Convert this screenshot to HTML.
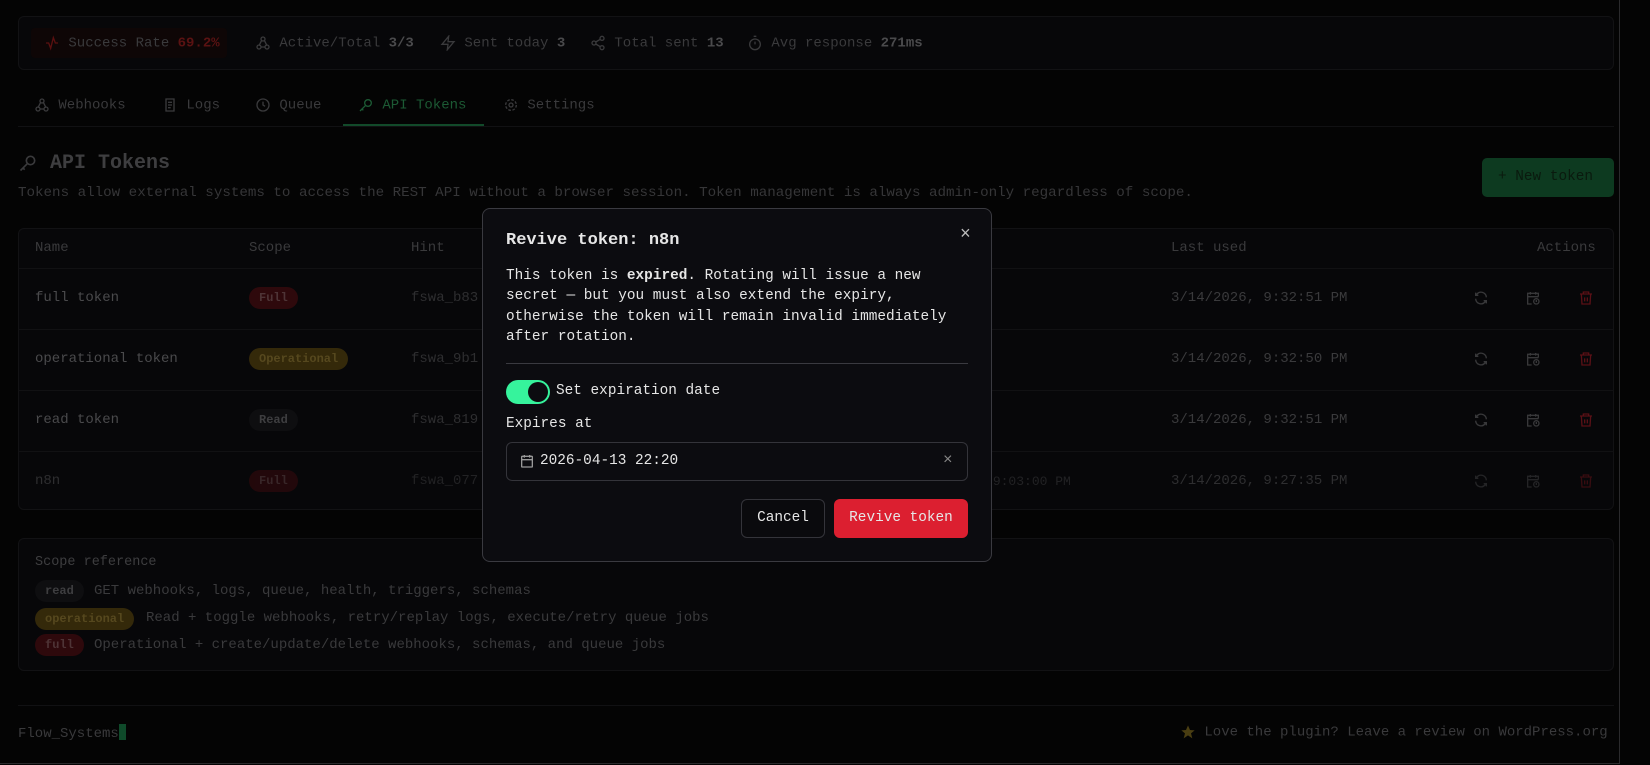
<!DOCTYPE html>
<html><head><meta charset="utf-8"><style>
*{box-sizing:border-box;margin:0;padding:0}
body{width:1650px;height:765px;background:#040404;font-family:"Liberation Mono",monospace;font-size:14px;color:#3a3a3c;overflow:hidden;position:relative}
.frame{position:absolute;left:0;top:0;width:1620px;height:764px;border-right:1px solid #2a2a2c;border-bottom:1px solid #2a2a2c}
.abs{position:absolute;white-space:nowrap}
.card{position:absolute;background:#070709;border:1px solid #121214;border-radius:6px}
svg{display:inline-block;vertical-align:middle}
.badge{position:absolute;height:22px;border-radius:11px;font-weight:bold;font-size:12px;line-height:22px;padding:0 10px}
.full{background:#2e090c;color:#4e3436}
.op{background:#34290a;color:#56481e}
.rd{background:#0e0e10;color:#3e3e40}
.rowline{position:absolute;left:18px;width:1596px;height:1px;background:#111113}
.modal{position:absolute;left:482px;top:208px;width:510px;height:354px;background:#0c0c10;border:1px solid #3a3a40;border-radius:8px;color:#e6e6e6}
.modal .t{font-family:"Liberation Mono",monospace;font-size:14.4px}
</style></head><body>
<div class="frame"></div>

<!-- stats bar -->
<div class="card" style="left:18px;top:16px;width:1596px;height:54px"></div>
<div class="abs" style="left:31px;top:28px;width:196px;height:30px;background:#0e0606;border-radius:4px"></div>
<div class="abs" style="left:44px;top:35px;color:#3a3a3c">
<svg width="16" height="16" viewBox="0 0 24 24" fill="none" stroke="#5a1010" stroke-width="2"><path d="M3 12h4l3 8 4-16 3 8h4"/></svg>
 Success Rate <b style="color:#5a1212">69.2%</b></div>
<div class="abs" style="left:255px;top:35px"><svg width="16" height="16" viewBox="0 0 24 24" fill="none" stroke="#3a3a3c" stroke-width="2"><circle cx="6" cy="18" r="3"/><circle cx="18" cy="18" r="3"/><circle cx="12" cy="6" r="3"/><path d="M9 18h6M10 8l-4 8M14 8l4 8"/></svg> Active/Total <b style="color:#4a4a4c">3/3</b></div>
<div class="abs" style="left:440px;top:35px"><svg width="16" height="16" viewBox="0 0 24 24" fill="none" stroke="#3a3a3c" stroke-width="2"><path d="M13 2 3 14h9l-1 8 10-12h-9z"/></svg> Sent today <b style="color:#4a4a4c">3</b></div>
<div class="abs" style="left:590px;top:35px"><svg width="16" height="16" viewBox="0 0 24 24" fill="none" stroke="#3a3a3c" stroke-width="2"><circle cx="18" cy="5" r="3"/><circle cx="6" cy="12" r="3"/><circle cx="18" cy="19" r="3"/><path d="M8.6 13.5l6.8 4M15.4 6.5l-6.8 4"/></svg> Total sent <b style="color:#4a4a4c">13</b></div>
<div class="abs" style="left:747px;top:35px"><svg width="16" height="16" viewBox="0 0 24 24" fill="none" stroke="#3a3a3c" stroke-width="2"><circle cx="12" cy="14" r="8"/><path d="M12 14V10M10 2h4"/></svg> Avg response <b style="color:#4a4a4c">271ms</b></div>

<!-- tabs -->
<div class="abs" style="left:34px;top:97px"><svg width="16" height="16" viewBox="0 0 24 24" fill="none" stroke="#3a3a3c" stroke-width="2"><circle cx="6" cy="18" r="3"/><circle cx="18" cy="18" r="3"/><circle cx="12" cy="6" r="3"/><path d="M9 18h6M10 8l-4 8M14 8l4 8"/></svg> Webhooks</div>
<div class="abs" style="left:162px;top:97px"><svg width="16" height="16" viewBox="0 0 24 24" fill="none" stroke="#3a3a3c" stroke-width="2"><path d="M6 3h12v18H6zM9 8h6M9 12h6M9 16h4"/></svg> Logs</div>
<div class="abs" style="left:255px;top:97px"><svg width="16" height="16" viewBox="0 0 24 24" fill="none" stroke="#3a3a3c" stroke-width="2"><circle cx="12" cy="12" r="9"/><path d="M12 7v5l3 2"/></svg> Queue</div>
<div class="abs" style="left:358px;top:97px;color:#1c5a34"><svg width="16" height="16" viewBox="0 0 24 24" fill="none" stroke="#1c5a34" stroke-width="2"><circle cx="15" cy="9" r="5"/><path d="M11 13 3 21M6 18l2 2"/></svg> API Tokens</div>
<div class="abs" style="left:503px;top:97px"><svg width="16" height="16" viewBox="0 0 24 24" fill="none" stroke="#3a3a3c" stroke-width="2"><circle cx="12" cy="12" r="3"/><circle cx="12" cy="12" r="8" stroke-dasharray="4 2.3"/></svg> Settings</div>
<div class="abs" style="left:18px;top:126px;width:1596px;height:1px;background:#111113"></div>
<div class="abs" style="left:343px;top:124px;width:141px;height:2px;background:#124a2a"></div>

<!-- heading -->
<div class="abs" style="left:18px;top:152px;font-size:20px;font-weight:bold;color:#3e3e40"><svg width="20" height="20" viewBox="0 0 24 24" fill="none" stroke="#3a3a3c" stroke-width="2"><circle cx="15" cy="9" r="5"/><path d="M11 13 3 21M6 18l2 2"/></svg> API Tokens</div>
<div class="abs" style="left:18px;top:185px;color:#363638;font-size:14.2px">Tokens allow external systems to access the REST API without a browser session. Token management is always admin-only regardless of scope.</div>
<div class="abs" style="left:1482px;top:158px;width:132px;height:39px;background:#0d3a20;border-radius:5px;color:#0a1a0e;line-height:39px;padding-left:16px;font-size:14.4px">+ New token</div>

<!-- table -->
<div class="card" style="left:18px;top:228px;width:1596px;height:282px"></div>
<div class="abs" style="left:35px;top:240px">Name</div>
<div class="abs" style="left:249px;top:240px">Scope</div>
<div class="abs" style="left:411px;top:240px">Hint</div>
<div class="abs" style="left:1171px;top:240px">Last used</div>
<div class="abs" style="left:1537px;top:240px">Actions</div>
<div class="rowline" style="top:268px"></div>
<div class="rowline" style="top:329px"></div>
<div class="rowline" style="top:390px"></div>
<div class="rowline" style="top:451px"></div>

<div class="abs" style="left:35px;top:290px;color:#4a4a4c">full token</div>
<div class="badge full" style="left:249px;top:287px">Full</div>
<div class="abs" style="left:411px;top:290px;color:#2e2e30">fswa_b83</div>
<div class="abs" style="left:1171px;top:290px">3/14/2026, 9:32:51 PM</div>

<div class="abs" style="left:35px;top:351px;color:#4a4a4c">operational token</div>
<div class="badge op" style="left:249px;top:348px">Operational</div>
<div class="abs" style="left:411px;top:351px;color:#2e2e30">fswa_9b1</div>
<div class="abs" style="left:1171px;top:351px">3/14/2026, 9:32:50 PM</div>

<div class="abs" style="left:35px;top:412px;color:#4a4a4c">read token</div>
<div class="badge rd" style="left:249px;top:409px">Read</div>
<div class="abs" style="left:411px;top:412px;color:#2e2e30">fswa_819</div>
<div class="abs" style="left:1171px;top:412px">3/14/2026, 9:32:51 PM</div>

<div class="abs" style="left:35px;top:473px;color:#2e2e30">n8n</div>
<div class="badge full" style="left:249px;top:470px;opacity:.7">Full</div>
<div class="abs" style="left:411px;top:473px;color:#222224">fswa_077</div>
<div class="abs" style="left:907px;top:474px;color:#222224;font-size:13px">3/13/2026, 9:03:00 PM</div>
<div class="abs" style="left:1171px;top:473px;color:#2e2e30">3/14/2026, 9:27:35 PM</div>

<!-- action icons -->
<div class="abs" style="left:1473px;top:290px;line-height:0">
<svg width="16" height="16" viewBox="0 0 24 24" fill="none" stroke="#38383a" stroke-width="2"><path d="M20 11a8 8 0 0 0-14-5L4 8M4 4v4h4M4 13a8 8 0 0 0 14 5l2-2M20 20v-4h-4"/></svg>
<svg style="margin-left:28px" width="16" height="16" viewBox="0 0 24 24" fill="none" stroke="#38383a" stroke-width="2"><path d="M10 21H4V5h16v5M4 10h16M8 3v4M16 3v4"/><circle cx="17" cy="17" r="4"/><path d="M17 15v2h1"/></svg>
<svg style="margin-left:28px" width="16" height="16" viewBox="0 0 24 24" fill="none" stroke="#5a1016" stroke-width="2"><path d="M3 6h18M8 6V3h8v3M5 6l1 15h12l1-15M10 11v6M14 11v6"/></svg></div>
<div class="abs" style="left:1473px;top:351px;line-height:0">
<svg width="16" height="16" viewBox="0 0 24 24" fill="none" stroke="#38383a" stroke-width="2"><path d="M20 11a8 8 0 0 0-14-5L4 8M4 4v4h4M4 13a8 8 0 0 0 14 5l2-2M20 20v-4h-4"/></svg>
<svg style="margin-left:28px" width="16" height="16" viewBox="0 0 24 24" fill="none" stroke="#38383a" stroke-width="2"><path d="M10 21H4V5h16v5M4 10h16M8 3v4M16 3v4"/><circle cx="17" cy="17" r="4"/><path d="M17 15v2h1"/></svg>
<svg style="margin-left:28px" width="16" height="16" viewBox="0 0 24 24" fill="none" stroke="#5a1016" stroke-width="2"><path d="M3 6h18M8 6V3h8v3M5 6l1 15h12l1-15M10 11v6M14 11v6"/></svg></div>
<div class="abs" style="left:1473px;top:412px;line-height:0">
<svg width="16" height="16" viewBox="0 0 24 24" fill="none" stroke="#38383a" stroke-width="2"><path d="M20 11a8 8 0 0 0-14-5L4 8M4 4v4h4M4 13a8 8 0 0 0 14 5l2-2M20 20v-4h-4"/></svg>
<svg style="margin-left:28px" width="16" height="16" viewBox="0 0 24 24" fill="none" stroke="#38383a" stroke-width="2"><path d="M10 21H4V5h16v5M4 10h16M8 3v4M16 3v4"/><circle cx="17" cy="17" r="4"/><path d="M17 15v2h1"/></svg>
<svg style="margin-left:28px" width="16" height="16" viewBox="0 0 24 24" fill="none" stroke="#5a1016" stroke-width="2"><path d="M3 6h18M8 6V3h8v3M5 6l1 15h12l1-15M10 11v6M14 11v6"/></svg></div>
<div class="abs" style="left:1473px;top:473px;line-height:0;opacity:.6">
<svg width="16" height="16" viewBox="0 0 24 24" fill="none" stroke="#38383a" stroke-width="2"><path d="M20 11a8 8 0 0 0-14-5L4 8M4 4v4h4M4 13a8 8 0 0 0 14 5l2-2M20 20v-4h-4"/></svg>
<svg style="margin-left:28px" width="16" height="16" viewBox="0 0 24 24" fill="none" stroke="#38383a" stroke-width="2"><path d="M10 21H4V5h16v5M4 10h16M8 3v4M16 3v4"/><circle cx="17" cy="17" r="4"/><path d="M17 15v2h1"/></svg>
<svg style="margin-left:28px" width="16" height="16" viewBox="0 0 24 24" fill="none" stroke="#5a1016" stroke-width="2"><path d="M3 6h18M8 6V3h8v3M5 6l1 15h12l1-15M10 11v6M14 11v6"/></svg></div>

<!-- scope reference -->
<div class="card" style="left:18px;top:538px;width:1596px;height:133px"></div>
<div class="abs" style="left:35px;top:555px;font-size:13.5px;color:#3e3e40">Scope reference</div>
<div class="badge rd" style="left:35px;top:580px">read</div>
<div class="abs" style="left:94px;top:583px">GET webhooks, logs, queue, health, triggers, schemas</div>
<div class="badge op" style="left:35px;top:608px">operational</div>
<div class="abs" style="left:146px;top:610px">Read + toggle webhooks, retry/replay logs, execute/retry queue jobs</div>
<div class="badge full" style="left:35px;top:634px">full</div>
<div class="abs" style="left:94px;top:637px">Operational + create/update/delete webhooks, schemas, and queue jobs</div>

<!-- footer -->
<div class="abs" style="left:18px;top:705px;width:1596px;height:1px;background:#111113"></div>
<div class="abs" style="left:18px;top:724px">Flow_Systems<span style="display:inline-block;width:7px;height:16px;background:#0f4a2a;vertical-align:-3px"></span></div>
<div class="abs" style="left:1180px;top:724px"><svg width="16" height="16" viewBox="0 0 24 24"><path fill="#4a3e12" d="M12 2l3 7 7 .5-5.5 4.5 2 7.5L12 17l-6.5 4.5 2-7.5L2 9.5 9 9z"/></svg> Love the plugin? Leave a review on WordPress.org</div>

<!-- modal -->
<div class="modal">
<div class="abs" style="left:23px;top:22px;font-size:17px;font-weight:bold">Revive token: n8n</div>
<div class="abs" style="left:477px;top:16px;font-size:18px;color:#bbb">×</div>
<div class="abs t" style="left:23px;top:57px;line-height:20.3px;white-space:normal;width:460px">This token is <b>expired</b>. Rotating will issue a new secret — but you must also extend the expiry, otherwise the token will remain invalid immediately after rotation.</div>
<div class="abs" style="left:23px;top:154px;width:462px;height:1px;background:#3a3a40"></div>
<div class="abs" style="left:23px;top:171px;width:44px;height:24px;border-radius:12px;background:#36f39c"></div>
<div class="abs" style="left:45px;top:173px;width:20px;height:20px;border-radius:10px;background:#0c0c10"></div>
<div class="abs t" style="left:73px;top:174px">Set expiration date</div>
<div class="abs t" style="left:23px;top:207px">Expires at</div>
<div class="abs" style="left:23px;top:233px;width:462px;height:39px;border:1px solid #34343a;border-radius:6px"></div>
<div class="abs" style="left:36px;top:244px;line-height:0"><svg width="16" height="16" viewBox="0 0 24 24" fill="none" stroke="#999" stroke-width="2"><rect x="4" y="5" width="16" height="16" rx="1"/><path d="M4 10h16M8 3v4M16 3v4"/></svg></div>
<div class="abs t" style="left:57px;top:244px">2026-04-13 22:20</div>
<div class="abs" style="left:460px;top:242px;font-size:16px;color:#888">×</div>
<div class="abs" style="left:258px;top:290px;width:84px;height:39px;border:1px solid #34343a;border-radius:6px;background:#0a0a0d;text-align:center;line-height:37px" ><span class="t">Cancel</span></div>
<div class="abs" style="left:351px;top:290px;width:134px;height:39px;border-radius:6px;background:#dc1f30;text-align:center;line-height:39px"><span class="t">Revive token</span></div>
</div>
</body></html>
